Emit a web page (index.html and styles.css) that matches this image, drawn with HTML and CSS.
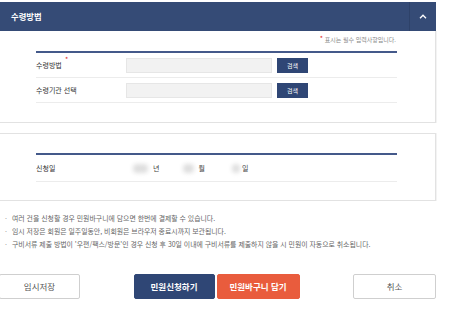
FILE: index.html
```html
<!DOCTYPE html>
<html lang="ko">
<head>
<meta charset="utf-8">
<link rel="stylesheet" href="styles.css">
</head>
<body>
<div class="wrap">
  <div class="header">
    <h2 class="header-title">수령방법</h2>
    <button class="toggle" aria-label="접기">
      <svg width="8" height="5" viewBox="0 0 8 5"><path d="M1 4.2 L4 1.2 L7 4.2" fill="none" stroke="#fff" stroke-width="1.3"/></svg>
    </button>
  </div>

  <div class="panel panel-first">
    <p class="req-note"><span class="star">*</span> 표시는 필수 입력사항입니다.</p>
    <div class="table">
      <div class="row">
        <div class="label">수령방법<span class="req">*</span></div>
        <div class="field"><span class="input"></span><button class="btn-search">검색</button></div>
      </div>
      <div class="row">
        <div class="label">수령기관 선택</div>
        <div class="field"><span class="input"></span><button class="btn-search">검색</button></div>
      </div>
    </div>
  </div>

  <div class="panel panel-second">
    <div class="table">
      <div class="row row-date">
        <div class="label">신청일</div>
        <div class="date">
          <span class="blur blur-y"></span><span class="unit">년</span>
          <span class="blur blur-m"></span><span class="unit">월</span>
          <span class="blur blur-d"></span><span class="unit">일</span>
        </div>
      </div>
    </div>
  </div>

  <ul class="notes">
    <li>여러 건을 신청할 경우 민원바구니에 담으면 한번에 결제할 수 있습니다.</li>
    <li>임시 저장은 회원은 일주일동안, 비회원은 브라우저 종료시까지 보관됩니다.</li>
    <li>구비서류 제출 방법이 '우편/팩스/방문'인 경우 신청 후 30일 이내에 구비서류를 제출하지 않을 시 민원이 자동으로 취소됩니다.</li>
  </ul>

  <div class="actions">
    <button class="btn btn-line">임시저장</button>
    <div class="center-btns">
      <button class="btn btn-navy">민원신청하기</button>
      <button class="btn btn-orange">민원바구니 담기</button>
    </div>
    <button class="btn btn-line">취소</button>
  </div>
</div>
</body>
</html>
```

FILE: styles.css
```css
* { box-sizing: border-box; }
body {
  margin: 0;
  background: #fff;
  font-family: "Noto Sans CJK KR", "Noto Sans", sans-serif;
  color: #333;
}
.wrap {
  width: 436px;
  padding-top: 2px;
}
.header {
  height: 29px;
  background: #354b76;
  display: flex;
  align-items: center;
  justify-content: space-between;
}
.header-title {
  margin: 0 0 0 11px;
  font-size: 8.3px;
  font-weight: 700;
  color: #fff;
  line-height: 1;
}
.toggle {
  width: 26px;
  height: 29px;
  border: 0;
  border-left: 1px solid #2e4269;
  background: transparent;
  padding: 0;
  display: flex;
  align-items: center;
  justify-content: center;
  margin-right: 1px;
}
.panel {
  border: 1px solid #e2e2e2;
  border-left: 0;
  box-shadow: 1px 0 0 #f3f3f3;
  padding: 0 38px 0 36px;
}
.panel-first {
  border-top: 0;
  padding-bottom: 19px;
}
.panel-second {
  margin-top: 10px;
  padding-top: 19px;
  padding-bottom: 18px;
}
.req-note {
  margin: 0;
  height: 20px;
  line-height: 18px;
  text-align: right;
  font-size: 6px;
  color: #888;
  padding-right: 1px;
}
.star { color: #e02020; font-size: 7px; vertical-align: top; line-height: 14px; }
.table {
  border-top: 2px solid #44598a;
}
.row {
  height: 25px;
  border-bottom: 1px solid #ececec;
  display: flex;
  align-items: center;
}
.row-date { height: 27px; }
.label {
  width: 90px;
  font-size: 7px;
  color: #333;
  position: relative;
}
.req {
  position: absolute;
  color: #e02020;
  font-size: 7px;
  left: 29px;
  top: -6px;
}
.field {
  display: flex;
  align-items: center;
  gap: 5px;
}
.input {
  display: block;
  width: 146px;
  height: 15px;
  background: #f2f2f2;
  border: 1px solid #e6e6e6;
}
.btn-search {
  width: 31px;
  height: 15px;
  border: 0;
  padding: 0;
  background: #2f4675;
  color: #fff;
  font-family: inherit;
  font-size: 6px;
  line-height: 15px;
}
.date {
  display: flex;
  align-items: center;
  font-size: 7px;
  color: #444;
  padding-left: 7px;
}
.blur {
  display: block;
  height: 9px;
  background: #dedede;
  border-radius: 4px;
  filter: blur(2px);
}
.blur-y { width: 15px; margin-right: 5px; }
.blur-m { width: 11px; margin-left: 24px; margin-right: 4px; }
.blur-d { width: 8px; margin-left: 27px; margin-right: 2px; }
.notes {
  list-style: none;
  margin: 11px 0 0;
  padding: 0 0 0 12px;
  font-size: 6.9px;
  line-height: 13px;
  color: #666;
}
.notes li {
  position: relative;
  white-space: nowrap;
}
.notes li::before {
  content: "·";
  position: absolute;
  left: -7px;
  color: #999;
}
.actions {
  margin-top: 23px;
  display: flex;
  justify-content: space-between;
  align-items: center;
}
.center-btns {
  display: flex;
  gap: 2px;
}
.btn {
  height: 25px;
  border-radius: 2px;
  font-family: inherit;
  font-size: 8.5px;
  padding: 0;
  line-height: 23px;
}
.btn-line {
  width: 81px;
  background: #fff;
  border: 1px solid #cfcfcf;
  color: #555;
}
.btn-line:first-child { margin-left: -1px; }
.actions > .btn-line:last-child { width: 83px; }
.btn-navy {
  width: 81px;
  background: #2f4675;
  border: 1px solid #2f4675;
  color: #fff;
  font-weight: 700;
}
.btn-orange {
  width: 83px;
  background: #e95c3d;
  border: 1px solid #e95c3d;
  color: #fff;
  font-weight: 700;
}
```
